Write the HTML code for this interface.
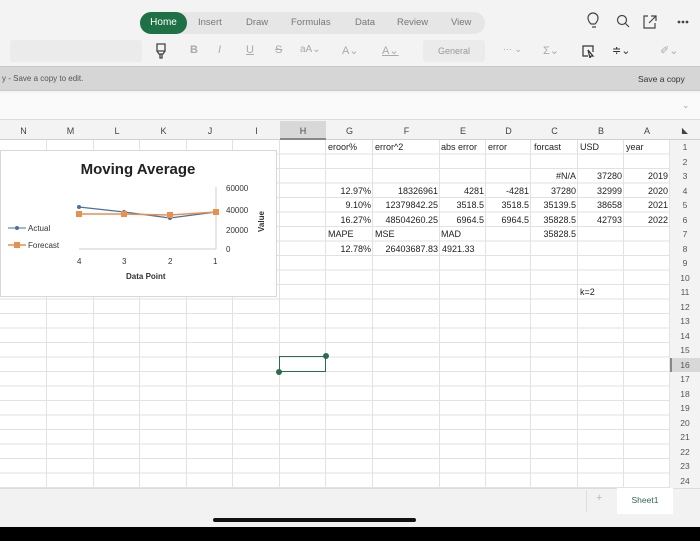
<!DOCTYPE html>
<html><head><meta charset="utf-8"><style>
*{margin:0;padding:0;box-sizing:border-box}
body{width:700px;height:541px;overflow:hidden;background:#f3f3f3;font-family:"Liberation Sans",sans-serif;position:relative;color:#222}
.a{position:absolute}
.tab{position:absolute;top:17px;font-size:9.5px;color:#777}
.cell{position:absolute;font-size:9px;color:#222;line-height:14.5px;white-space:nowrap}
.r{text-align:right}
.rn{position:absolute;left:670px;width:30px;text-align:center;font-size:8.5px;color:#555;line-height:14.5px}
.ch{position:absolute;top:122px;font-size:9px;color:#444;text-align:center;line-height:18px}
.tb{position:absolute;top:44px;font-size:11px;color:#aaa}
</style></head><body>
<div class="a" style="left:140px;top:12px;width:345px;height:22px;background:#e6e6e6;border-radius:11px"></div>
<div class="a" style="left:140px;top:12px;width:47px;height:22px;background:#1e7145;border-radius:11px;color:#fff;font-size:10px;text-align:center;line-height:22px">Home</div>
<div class="tab" style="left:198px">Insert</div>
<div class="tab" style="left:246px">Draw</div>
<div class="tab" style="left:291px">Formulas</div>
<div class="tab" style="left:355px">Data</div>
<div class="tab" style="left:397px">Review</div>
<div class="tab" style="left:451px">View</div>
<svg class="a" style="left:586px;top:12px" width="110" height="20" fill="none" stroke="#444" stroke-width="1.2">
<path d="M6 15h4M5 12c-2-2-3-4-3-6a5 5 0 0 1 10 0c0 2-1 4-3 6z"/>
<circle cx="36" cy="8" r="4.5"/><path d="M39 11l4 4"/>
<path d="M62 4h-4v12h11v-5M65 4h5v5M70 4l-7 7"/>
<circle cx="93" cy="10" r="0.8" fill="#444"/><circle cx="97" cy="10" r="0.8" fill="#444"/><circle cx="101" cy="10" r="0.8" fill="#444"/>
</svg>
<div class="a" style="left:10px;top:40px;width:132px;height:22px;background:#ebebeb;border-radius:3px"></div>
<svg class="a" style="left:155px;top:43px" width="12" height="16" fill="none" stroke="#444" stroke-width="1.3"><path d="M2 1h8v7H2zM2 8l2 3h4l2-3M5 11v4h2v-4"/></svg>
<div class="tb" style="left:190px;font-weight:bold">B</div>
<div class="tb" style="left:218px;font-style:italic">I</div>
<div class="tb" style="left:246px;text-decoration:underline">U</div>
<div class="tb" style="left:275px;text-decoration:line-through">S</div>
<div class="tb" style="left:300px;font-size:10px">aA⌄</div>
<div class="tb" style="left:342px">A⌄</div>
<div class="tb" style="left:382px;text-decoration:underline">A⌄</div>
<div class="a" style="left:423px;top:40px;width:62px;height:22px;background:#ebebeb;border-radius:3px;font-size:9px;color:#999;text-align:center;line-height:22px">General</div>
<div class="tb" style="left:503px;font-size:9px">··· ⌄</div>
<div class="tb" style="left:543px">Σ⌄</div>
<svg class="a" style="left:581px;top:44px" width="14" height="14" fill="none" stroke="#333" stroke-width="1.2"><path d="M12 8V2H2v10h5M7 6l5 6-2 0-1 2z"/></svg>
<div class="tb" style="left:612px;color:#333">≑⌄</div>
<div class="tb" style="left:660px">✐⌄</div>
<div class="a" style="left:0;top:66px;width:700px;height:25px;background:#d6d6d6;border-top:1px solid #c8c8c8;border-bottom:1px solid #c8c8c8"></div>
<div class="a" style="left:2px;top:74px;font-size:8px;color:#555">y - Save a copy to edit.</div>
<div class="a" style="left:638px;top:74px;font-size:8.5px;color:#333">Save a copy</div>
<div class="a" style="left:0;top:93px;width:700px;height:27px;background:#fafafa;border-bottom:1px solid #ddd"></div>
<div class="a" style="left:682px;top:100px;font-size:9px;color:#aaa">⌄</div>
<div class="a" style="left:0;top:121px;width:700px;height:19px;background:#f3f3f3;border-bottom:1px solid #d0d0d0"></div>
<div class="a" style="left:280px;top:121px;width:46px;height:19px;background:#d8d8d8;border-bottom:2px solid #888"></div>
<div class="ch" style="left:0;width:47px">N</div>
<div class="ch" style="left:47px;width:47px">M</div>
<div class="ch" style="left:94px;width:46px">L</div>
<div class="ch" style="left:140px;width:47px">K</div>
<div class="ch" style="left:187px;width:46px">J</div>
<div class="ch" style="left:233px;width:47px">I</div>
<div class="ch" style="left:280px;width:46px">H</div>
<div class="ch" style="left:326px;width:47px">G</div>
<div class="ch" style="left:373px;width:67px">F</div>
<div class="ch" style="left:440px;width:46px">E</div>
<div class="ch" style="left:486px;width:45px">D</div>
<div class="ch" style="left:531px;width:47px">C</div>
<div class="ch" style="left:578px;width:46px">B</div>
<div class="ch" style="left:624px;width:46px">A</div>
<div class="ch" style="left:670px;width:30px;font-size:8px">◣</div>
<div class="a" style="left:0;top:140px;width:670px;height:348px;background-color:#fff;background-image:repeating-linear-gradient(to bottom,transparent 0,transparent 13.5px,#e2e2e2 13.5px,#e2e2e2 14.5px)"></div>
<div class="a" style="left:0;top:140px;width:670px;height:348px;background:linear-gradient(#e2e2e2,#e2e2e2) 46px 0/1px 100% no-repeat,linear-gradient(#e2e2e2,#e2e2e2) 93px 0/1px 100% no-repeat,linear-gradient(#e2e2e2,#e2e2e2) 139px 0/1px 100% no-repeat,linear-gradient(#e2e2e2,#e2e2e2) 186px 0/1px 100% no-repeat,linear-gradient(#e2e2e2,#e2e2e2) 232px 0/1px 100% no-repeat,linear-gradient(#e2e2e2,#e2e2e2) 279px 0/1px 100% no-repeat,linear-gradient(#e2e2e2,#e2e2e2) 325px 0/1px 100% no-repeat,linear-gradient(#e2e2e2,#e2e2e2) 372px 0/1px 100% no-repeat,linear-gradient(#e2e2e2,#e2e2e2) 439px 0/1px 100% no-repeat,linear-gradient(#e2e2e2,#e2e2e2) 485px 0/1px 100% no-repeat,linear-gradient(#e2e2e2,#e2e2e2) 530px 0/1px 100% no-repeat,linear-gradient(#e2e2e2,#e2e2e2) 577px 0/1px 100% no-repeat,linear-gradient(#e2e2e2,#e2e2e2) 623px 0/1px 100% no-repeat,linear-gradient(#e2e2e2,#e2e2e2) 669px 0/1px 100% no-repeat"></div>
<div class="a" style="left:670px;top:140px;width:30px;height:348px;background:#f3f3f3"></div>
<div class="a" style="left:670px;top:357.5px;width:30px;height:14.5px;background:#d8d8d8;border-left:2px solid #888"></div>
<div class="rn" style="top:140px">1</div><div class="rn" style="top:154.5px">2</div><div class="rn" style="top:169px">3</div><div class="rn" style="top:183.5px">4</div><div class="rn" style="top:198px">5</div><div class="rn" style="top:212.5px">6</div><div class="rn" style="top:227px">7</div><div class="rn" style="top:241.5px">8</div><div class="rn" style="top:256px">9</div><div class="rn" style="top:270.5px">10</div><div class="rn" style="top:285px">11</div><div class="rn" style="top:299.5px">12</div><div class="rn" style="top:314px">13</div><div class="rn" style="top:328.5px">14</div><div class="rn" style="top:343px">15</div><div class="rn" style="top:357.5px">16</div><div class="rn" style="top:372px">17</div><div class="rn" style="top:386.5px">18</div><div class="rn" style="top:401px">19</div><div class="rn" style="top:415.5px">20</div><div class="rn" style="top:430px">21</div><div class="rn" style="top:444.5px">22</div><div class="rn" style="top:459px">23</div><div class="rn" style="top:473.5px">24</div>
<div class="cell" style="left:328px;top:140px">eroor%</div>
<div class="cell" style="left:375px;top:140px">error^2</div>
<div class="cell" style="left:441px;top:140px">abs error</div>
<div class="cell" style="left:488px;top:140px">error</div>
<div class="cell" style="left:534px;top:140px">forcast</div>
<div class="cell" style="left:580px;top:140px">USD</div>
<div class="cell" style="left:626px;top:140px">year</div>
<div class="cell r" style="left:531px;width:45px;top:169px">#N/A</div>
<div class="cell r" style="left:578px;width:44px;top:169px">37280</div>
<div class="cell r" style="left:624px;width:44px;top:169px">2019</div>
<div class="cell r" style="left:326px;width:45px;top:183.5px">12.97%</div>
<div class="cell r" style="left:373px;width:65px;top:183.5px">18326961</div>
<div class="cell r" style="left:440px;width:44px;top:183.5px">4281</div>
<div class="cell r" style="left:486px;width:43px;top:183.5px">-4281</div>
<div class="cell r" style="left:531px;width:45px;top:183.5px">37280</div>
<div class="cell r" style="left:578px;width:44px;top:183.5px">32999</div>
<div class="cell r" style="left:624px;width:44px;top:183.5px">2020</div>
<div class="cell r" style="left:326px;width:45px;top:198px">9.10%</div>
<div class="cell r" style="left:373px;width:65px;top:198px">12379842.25</div>
<div class="cell r" style="left:440px;width:44px;top:198px">3518.5</div>
<div class="cell r" style="left:486px;width:43px;top:198px">3518.5</div>
<div class="cell r" style="left:531px;width:45px;top:198px">35139.5</div>
<div class="cell r" style="left:578px;width:44px;top:198px">38658</div>
<div class="cell r" style="left:624px;width:44px;top:198px">2021</div>
<div class="cell r" style="left:326px;width:45px;top:212.5px">16.27%</div>
<div class="cell r" style="left:373px;width:65px;top:212.5px">48504260.25</div>
<div class="cell r" style="left:440px;width:44px;top:212.5px">6964.5</div>
<div class="cell r" style="left:486px;width:43px;top:212.5px">6964.5</div>
<div class="cell r" style="left:531px;width:45px;top:212.5px">35828.5</div>
<div class="cell r" style="left:578px;width:44px;top:212.5px">42793</div>
<div class="cell r" style="left:624px;width:44px;top:212.5px">2022</div>
<div class="cell" style="left:328px;top:227px">MAPE</div>
<div class="cell" style="left:375px;top:227px">MSE</div>
<div class="cell" style="left:441px;top:227px">MAD</div>
<div class="cell r" style="left:531px;width:45px;top:227px">35828.5</div>
<div class="cell r" style="left:326px;width:45px;top:241.5px">12.78%</div>
<div class="cell r" style="left:373px;width:65px;top:241.5px">26403687.83</div>
<div class="cell" style="left:442px;top:241.5px">4921.33</div>
<div class="cell" style="left:580px;top:285px">k=2</div>
<div class="a" style="left:279px;top:356px;width:47px;height:16px;border:1.5px solid #2c6b4e"></div>
<div class="a" style="left:323px;top:353px;width:6px;height:6px;border-radius:3px;background:#2c6b4e"></div>
<div class="a" style="left:276px;top:369px;width:6px;height:6px;border-radius:3px;background:#2c6b4e"></div>
<div class="a" style="left:0;top:150px;width:277px;height:147px;background:#fff;border:1px solid #d8d8d8"></div>
<svg class="a" style="left:0;top:150px" width="277" height="147">
<text x="138" y="24" font-family="Liberation Sans" font-size="15" font-weight="bold" text-anchor="middle" fill="#222">Moving Average</text>
<line x1="79" y1="99" x2="216" y2="99" stroke="#ccc"/>
<line x1="216" y1="37" x2="216" y2="99" stroke="#ccc"/>
<g font-family="Liberation Sans" font-size="8" fill="#333">
<text x="226" y="41">60000</text><text x="226" y="63">40000</text><text x="226" y="83">20000</text><text x="226" y="102">0</text>
<text x="77" y="114">4</text><text x="122" y="114">3</text><text x="168" y="114">2</text><text x="213" y="114">1</text>
<text x="126" y="129" font-weight="bold">Data Point</text>
<text transform="translate(264,82) rotate(-90)" font-weight="bold">Value</text>
<text x="28" y="81">Actual</text><text x="28" y="98">Forecast</text>
</g>
<polyline points="79,57 124,62 170,68 216,62" fill="none" stroke="#4a6fa5" stroke-width="1.3"/>
<polyline points="79,64 124,64 170,65 216,62" fill="none" stroke="#e8914f" stroke-width="1.5"/>
<g fill="#4a6fa5"><circle cx="79" cy="57" r="2"/><circle cx="124" cy="62" r="2"/><circle cx="170" cy="68" r="2"/></g>
<g fill="#e8914f"><rect x="76" y="61" width="6" height="6"/><rect x="121" y="61" width="6" height="6"/><rect x="167" y="62" width="6" height="6"/><rect x="213" y="59" width="6" height="6"/></g>
<line x1="8" y1="78" x2="26" y2="78" stroke="#4a6fa5"/><circle cx="17" cy="78" r="2" fill="#4a6fa5"/>
<line x1="8" y1="95" x2="26" y2="95" stroke="#e8914f" stroke-width="1.5"/><rect x="14" y="92" width="6" height="6" fill="#e8914f"/>
</svg>
<div class="a" style="left:0;top:488px;width:700px;height:39px;background:#f2f2f2;border-top:1px solid #ddd"></div>
<div class="a" style="left:586px;top:490px;width:1px;height:22px;background:#ddd"></div>
<div class="a" style="left:596px;top:492px;font-size:11px;color:#bbb">+</div>
<div class="a" style="left:617px;top:488px;width:56px;height:26px;background:#fff;font-size:8.5px;color:#2c6b4e;text-align:center;line-height:24px">Sheet1</div>
<div class="a" style="left:213px;top:518px;width:203px;height:4px;border-radius:2px;background:#111"></div>
<div class="a" style="left:0;top:527px;width:700px;height:14px;background:#000"></div>
</body></html>
